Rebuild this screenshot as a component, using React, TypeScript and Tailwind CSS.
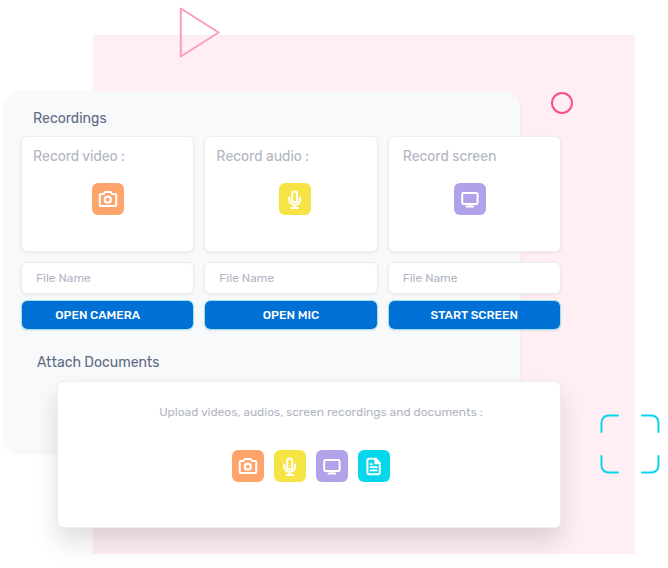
import type { ReactNode } from 'react';

type IconKind = 'camera' | 'mic' | 'screen' | 'file';

const glyphs: Record<IconKind, ReactNode> = {
  camera: (
    <>
      <path d="M9 10.9h2.6l1.2-2h5.9l1.2 2H23a1.2 1.2 0 0 1 1.2 1.2v9.8a1.2 1.2 0 0 1-1.2 1.2H9a1.2 1.2 0 0 1-1.2-1.2v-9.8A1.2 1.2 0 0 1 9 10.9Z" />
      <circle cx="15.8" cy="16.7" r="3" strokeWidth="2.2" />
    </>
  ),
  mic: (
    <>
      <rect x="13.2" y="8.6" width="5" height="10.8" rx="2.5" />
      <path d="M10.2 14.5v2a5.5 5.5 0 0 0 11 0v-2M15.7 22v2.8M12.4 25h6.7" />
    </>
  ),
  screen: (
    <>
      <rect x="8.2" y="9.9" width="15.4" height="11.2" rx="1.4" />
      <path d="M15.9 21.4v2M12.5 23.6h6.8" />
    </>
  ),
  file: (
    <>
      <path d="M10.8 8.8h6.8l4.2 4.2v9.8a1.4 1.4 0 0 1-1.4 1.4h-9.6a1.4 1.4 0 0 1-1.4-1.4V10.200a1.4 1.4 0 0 1 1.4-1.4Z" />
      <path d="M17.4 9v4.200h4.200Z" fill="white" />
      <path d="M12.4 14.200h1.6M12.4 17.2h6.400M12.4 20.400h6.400" strokeWidth="1.7" />
    </>
  ),
};

const tileColors: Record<IconKind, string> = {
  camera: 'bg-[#ffa36c]',
  mic: 'bg-[#f6e444]',
  screen: 'bg-[#b1a1e8]',
  file: 'bg-[#06d7ea]',
};

function IconTile({ kind, label }: { kind: IconKind; label: string }) {
  return (
    <button type="button" aria-label={label} className={`size-8 rounded-md ${tileColors[kind]}`}>
      <svg
        viewBox="0 0 32 32"
        className="size-8"
        fill="none"
        stroke="white"
        strokeWidth="2"
        strokeLinecap="round"
        strokeLinejoin="round"
        aria-hidden="true"
      >
        {glyphs[kind]}
      </svg>
    </button>
  );
}

const recorders: {
  kind: IconKind;
  title: string;
  action: string;
  titlePad: string;
  iconPad: string;
  buttonPad: string;
}[] = [
  { kind: 'camera', title: 'Record video :', action: 'OPEN CAMERA', titlePad: 'pl-[11px]', iconPad: '', buttonPad: 'pr-5' },
  { kind: 'mic', title: 'Record audio :', action: 'OPEN MIC', titlePad: 'pl-[11px]', iconPad: 'pl-2', buttonPad: '' },
  { kind: 'screen', title: 'Record screen', action: 'START SCREEN', titlePad: 'pl-[14px]', iconPad: 'pr-2', buttonPad: '' },
];

const attachments: { kind: IconKind; label: string }[] = [
  { kind: 'camera', label: 'Attach video' },
  { kind: 'mic', label: 'Attach audio' },
  { kind: 'screen', label: 'Attach screen recording' },
  { kind: 'file', label: 'Attach document' },
];

const surface = 'rounded-md border border-[#ebedef] bg-white';

export default function App() {
  return (
    <main className="relative isolate min-h-screen overflow-hidden bg-white pt-[91px] pb-10 font-['Rubik','Inter',sans-serif]">
      <div className="absolute top-[35px] right-[33px] bottom-[14px] left-[93px] -z-20 bg-[#ffeef4]" />
      <svg className="absolute top-1 left-44 h-14 w-12" viewBox="0 0 48 56" fill="none" aria-hidden="true">
        <path d="M4.8 4.5v48L42.6 28.5Z" stroke="#fb9dbd" strokeWidth="2" strokeLinejoin="round" />
      </svg>
      <div className="absolute top-[92px] right-[95px] size-[22px] rounded-full border-2 border-[#fb4f83]" />
      <svg className="absolute right-2 bottom-[94px] size-[60px]" viewBox="0 0 60 60" fill="none" aria-hidden="true">
        <path
          d="M1.5 18V8.5a7 7 0 0 1 7-7H18M42 1.5h9.5a7 7 0 0 1 7 7V18M58.5 42v9.5a7 7 0 0 1-7 7H42M18 58.5H8.5a7 7 0 0 1-7-7V42"
          stroke="#06d7ea"
          strokeWidth="2"
          strokeLinecap="round"
        />
      </svg>

      <section className="relative pt-[18px] pr-[107px] pl-[21px]">
        <div className="absolute top-0 right-[148px] bottom-[76px] left-1 -z-10 rounded-2xl bg-[#f8f9fb] shadow-[0_2px_4px_rgba(60,80,70,0.06)]" />

        <h2 className="mb-[7px] pl-3 text-sm leading-5 text-[#5f6b84]">Recordings</h2>
        <div className="grid grid-cols-3 gap-x-[10px]">
          {recorders.map((r) => (
            <div key={r.kind} className="flex flex-col">
              <div className={`flex h-[116px] flex-col shadow-[0_1px_3px_rgba(60,80,80,0.09)] ${surface}`}>
                <h3 className={`pt-[10px] text-sm leading-5 text-[#b1b5c3] ${r.titlePad}`}>{r.title}</h3>
                <div className={`flex justify-center pt-4 ${r.iconPad}`}>
                  <IconTile kind={r.kind} label={r.title.replace(' :', '')} />
                </div>
              </div>
              <input
                type="text"
                aria-label={`File name for ${r.kind}`}
                placeholder="File Name"
                className={`mt-[10px] h-8 w-full px-[14px] text-xs text-[#5f6b84] shadow-[0_1px_3px_rgba(60,80,80,0.09)] outline-none placeholder:text-[#b1b5c3] ${surface}`}
              />
              <button
                type="button"
                className={`mt-[6px] h-[30px] rounded-md border border-[#9ce3ec] bg-[#0070d4] bg-clip-padding text-xs font-medium text-white shadow-[0_1px_2px_rgba(60,80,80,0.1)] ${r.buttonPad}`}
              >
                {r.action}
              </button>
            </div>
          ))}
        </div>

        <h2 className="mt-[23px] mb-2 pl-4 text-sm leading-5 text-[#5f6b84]">Attach Documents</h2>
        <div className={`ml-9 flex h-[147px] flex-col items-center shadow-[0_14px_24px_rgba(0,0,0,0.13)] ${surface}`}>
          <p className="mt-5 pl-6 text-xs leading-5 text-[#b1b5c3]">
            Upload videos, audios, screen recordings and documents :
          </p>
          <div className="mt-7 flex gap-[10px] pl-1">
            {attachments.map((a) => (
              <IconTile key={a.kind} kind={a.kind} label={a.label} />
            ))}
          </div>
        </div>
      </section>
    </main>
  );
}
